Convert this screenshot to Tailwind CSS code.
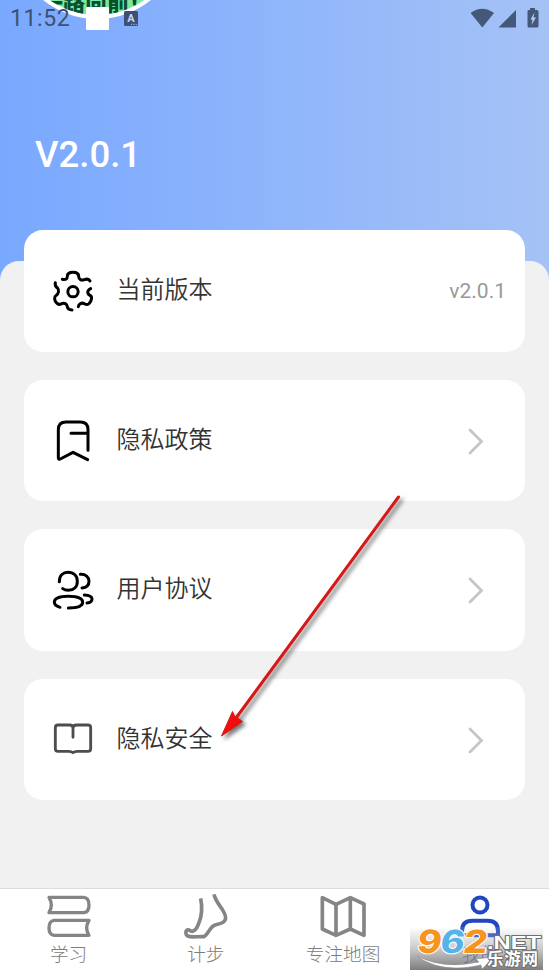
<!DOCTYPE html>
<html lang="zh-CN">
<head>
  <meta charset="UTF-8">
  <title>我的</title>
  <script src="https://cdn.jsdelivr.net/npm/@tailwindcss/browser@4"></script>
</head>
<body class="font-[Roboto,'Noto_Sans_CJK_SC',sans-serif]">
<div class="relative w-[549px] h-[976px] overflow-hidden flex flex-col bg-linear-to-r from-[#79a8ff] to-[#a5c2f6]">

  <!-- Header -->
  <header class="h-[261px] shrink-0">
    <div class="h-9 flex items-center justify-between pl-[10px] pr-[8px] pt-[3px] text-[#445879]">
      <span class="relative z-10 text-[23px] tracking-[0.6px] text-[#40506f]">11:52</span>
      <svg class="w-[70px] h-9 -mt-[3px]" viewBox="0 0 70 36" fill="currentColor">
        <path d="M-.5 13Q11 4.500 23 13L11.300 27.500Z"/>
        <path d="M45 10V27.500H27.500Z"/>
        <path d="M59 8H64V10H66Q67.500 10 67.500 11.500V26Q67.500 27.500 66 27.500H57.500Q56.500 27.500 56.500 26V11.500Q56.500 10 57.500 10H59Z"/>
        <path d="M63.500 12.500L59.500 19.500H61.500L60.500 25L65 17.500H62.500Z" fill="#b7cdf8"/>
      </svg>
    </div>
    <h1 class="pl-[35px] mt-[92px] text-[36.500px] leading-[54px] font-medium text-white">V2.0.1</h1>
  </header>

  <!-- Floating badge -->
  <svg class="absolute left-0 top-0 w-[160px] h-9" viewBox="0 0 160 36">
    <defs>
      <clipPath id="badge"><circle cx="97" cy="-67" r="82"/></clipPath>
    </defs>
    <circle cx="97" cy="-67" r="84" fill="#7de8a0" stroke="#fff" stroke-width="4"/>
    <text x="41" y="11" clip-path="url(#badge)" font-family="Noto Sans CJK SC" font-weight="900" font-size="22" fill="#07502e">一路向前！</text>
    <rect x="86" y="7" width="23" height="23" rx="1" fill="#fff"/>
    <rect x="124" y="11" width="14" height="15" rx="1.500" fill="#3d4f73"/>
    <text x="131" y="22" text-anchor="middle" font-family="Roboto" font-weight="700" font-size="11" fill="#c5d6fa">A</text>
    <path d="M131 24.300H137" stroke="#a5bdec" stroke-dasharray="1.300 1"/>
  </svg>

  <!-- Sheet -->
  <main class="h-[627px] shrink-0 rounded-t-[19px] bg-[#f1f1f1] px-6">
    <div class="-mt-[30.800px] flex flex-col gap-[27.700px] text-2xl font-[350] text-[#333]">
      <div class="h-[121.800px] w-[501px] rounded-[19px] bg-white flex items-center pl-[26px] pr-[19px]">
        <svg class="size-[46px]" viewBox="30 24 138 138" fill="none" stroke="#000" stroke-width="9" stroke-linecap="round" stroke-linejoin="round">
          <path d="M67 58C78 60 82 57 82 49C82 41 88 37 99 37C110 37 116 41 116 49C116 57 123 63 133 59C141 56 147 57 150 63"/>
          <path d="M152 86C140 92 141 102 151 107C158 111 154 123 148 130C144 135 138 134 133 131C125 127 116 131 115 140"/>
          <path d="M46 68C44 76 47 81 53 85C58 90 56 101 49 106C41 111 43 121 50 129C55 135 60 134 65 131C73 127 81 132 82 140C83 148 88 150 96 150"/>
          <circle cx="99" cy="95" r="15.500"/>
        </svg>
        <span class="ml-[20.500px] -mt-[2px] flex-1">当前版本</span>
        <span class="text-[21px] font-normal text-[#999]">v2.0.1</span>
      </div>
      <div class="h-[121.800px] w-[501px] rounded-[19px] bg-white flex items-center pl-[26px] pr-[41px]">
        <svg class="size-[46px]" viewBox="30 24 138 138" fill="none" stroke="#000" stroke-width="9" stroke-linecap="round" stroke-linejoin="round">
          <path d="M144 121V59Q144 36 121 36H78Q55 36 55 59V144Q55 150 61 147L99 127L143 149M93 70H143"/>
        </svg>
        <span class="ml-[20.500px] -mt-[2px] flex-1">隐私政策</span>
        <svg class="w-4 h-7" viewBox="0 0 16 28" fill="none" stroke="#c5c5c5" stroke-width="2.800" stroke-linecap="round"><path d="M2 3L13.500 14.500L2 26"/></svg>
      </div>
      <div class="h-[121.800px] w-[501px] rounded-[19px] bg-white flex items-center pl-[26px] pr-[41px]">
        <svg class="size-[46px]" viewBox="30 21 138 138" fill="none" stroke="#000" stroke-width="9" stroke-linecap="round" stroke-linejoin="round">
          <path d="M58 65C58 46 70 37 84 37C101 37 112 48 112 64C112 81 101 91 85 91C77 91 72 89 68 86"/>
          <path d="M121 43C137 42 147 51 147 64C147 76 139 83 126 84"/>
          <path d="M60 142C49 139 43 134 43 127C43 115 60 109 85 109C111 109 128 115 128 127C128 138 112 144 85 144"/>
          <path d="M133 105C148 106 156 110 156 117C156 124 150 128 141 129"/>
        </svg>
        <span class="ml-[20.500px] -mt-[2px] flex-1">用户协议</span>
        <svg class="w-4 h-7" viewBox="0 0 16 28" fill="none" stroke="#c5c5c5" stroke-width="2.800" stroke-linecap="round"><path d="M2 3L13.500 14.500L2 26"/></svg>
      </div>
      <div class="h-[121.800px] w-[501px] rounded-[19px] bg-white flex items-center pl-[26px] pr-[41px]">
        <svg class="size-[46px]" viewBox="30 51 138 138" fill="none" stroke="#4d4d4d" stroke-width="8.500" stroke-linecap="round" stroke-linejoin="round">
          <path d="M99 112V84Q99 75 89 75H54Q46 75 46 83V146Q46 154 54 154H86Q94 154 99 158Q104 154 112 154H144Q152 154 152 146V83Q152 75 144 75H110Q99 75 99 84"/>
        </svg>
        <span class="ml-[20.500px] -mt-[2px] flex-1">隐私安全</span>
        <svg class="w-4 h-7" viewBox="0 0 16 28" fill="none" stroke="#c5c5c5" stroke-width="2.800" stroke-linecap="round"><path d="M2 3L13.500 14.500L2 26"/></svg>
      </div>
    </div>
  </main>

  <!-- Tab bar -->
  <nav class="h-[88px] shrink-0 grid grid-cols-4 border-t border-[#dcdcdc] bg-white pt-[5px] text-[18.700px] leading-[31px] font-light text-[#7c7c7c]">
    <a class="flex flex-col items-center">
      <svg class="size-[46px]" viewBox="47 42 138 138" fill="none" stroke="#858585" stroke-width="10" stroke-linejoin="round">
        <path d="M56 52H161Q176 54 176 75Q176 96 161 98H56Q70 75 56 52ZM176 121H71Q56 123 56 144Q56 164 71 166H176Q162 144 176 121Z"/>
      </svg>
      <span>学习</span>
    </a>
    <a class="flex flex-col items-center">
      <svg class="size-[46px]" viewBox="459 42 138 138" fill="none" stroke="#858585" stroke-width="11" stroke-linejoin="round">
        <path d="M512 55C518 86 514 111 507 128C503 140 497 152 488 154C482 155 478 147 471 150C466 153 466 164 473 168C487 174 504 168 521 170C531 167 536 151 547 140C559 128 579 136 586 119C590 106 582 97 574 84C562 67 554 55 552 43"/>
      </svg>
      <span>计步</span>
    </a>
    <a class="flex flex-col items-center">
      <svg class="size-[46px]" viewBox="90 42 138 138" fill="none" stroke="#858585" stroke-width="11" stroke-linejoin="round">
        <path d="M97 53L138 73L181 53L222 72V166L181 147L138 166L97 147ZM138 73V166M181 53V147"/>
      </svg>
      <span>专注地图</span>
    </a>
    <a class="flex flex-col items-center text-[#2448c2]">
      <svg class="size-[46px]" viewBox="172 42 138 138" fill="none" stroke="#2047c1" stroke-width="12" stroke-linejoin="round">
        <circle cx="241" cy="75" r="22.500"/>
        <path d="M187 166V153Q187 122 218 122H264Q295 122 295 153V166Z"/>
      </svg>
      <span>我的</span>
    </a>
  </nav>

  <!-- Site watermark -->
  <div class="absolute left-[410px] top-[927px] w-[133px] h-[43px] bg-linear-to-b from-white/10 via-[#a8a8a8]/60 to-[#707070]/90">
    <svg class="w-[133px] h-[43px]" viewBox="0 0 133 43" stroke-linejoin="round">
      <path d="M7 29Q34 43 69 35L66 32L84 30L72 42L71 38Q31 47 7 29Z" fill="#fff" stroke="#888" stroke-width=".5"/>
      <g transform="skewX(-8)" font-family="Inter" font-weight="800" font-size="32" paint-order="stroke" stroke="#fff" stroke-width="2">
        <text x="10" y="26" textLength="24" lengthAdjust="spacingAndGlyphs" fill="#f7941e">9</text>
        <text x="33" y="26" textLength="24" lengthAdjust="spacingAndGlyphs" fill="#55b3ea">6</text>
        <text x="56" y="26" textLength="24" lengthAdjust="spacingAndGlyphs" fill="#f7941e">2</text>
      </g>
      <text x="77" y="21.500" textLength="54" lengthAdjust="spacingAndGlyphs" font-family="Liberation Sans" font-weight="700" font-size="19" fill="#fff" paint-order="stroke" stroke="#707070" stroke-width="2">.NET</text>
      <text x="77" y="38" textLength="51" font-family="Noto Sans CJK SC" font-weight="700" font-size="16.500" fill="#fff" paint-order="stroke" stroke="#707070" stroke-width="2">乐游网</text>
    </svg>
  </div>

  <!-- Pointer arrow -->
  <svg class="absolute left-[210px] top-[485px] w-[210px] h-[265px] drop-shadow-[3px_3px_2px_rgba(0,0,0,0.55)]" viewBox="210 485 210 265">
    <path d="M398.500 497L236 718" stroke="#d81717" stroke-width="3" stroke-linecap="round"/>
    <path d="M221.500 736L232.500 711.500L234.500 716L242.500 721.500Z" fill="#f20d0d" stroke="#d81717" stroke-linejoin="round"/>
  </svg>
</div>
</body>
</html>
